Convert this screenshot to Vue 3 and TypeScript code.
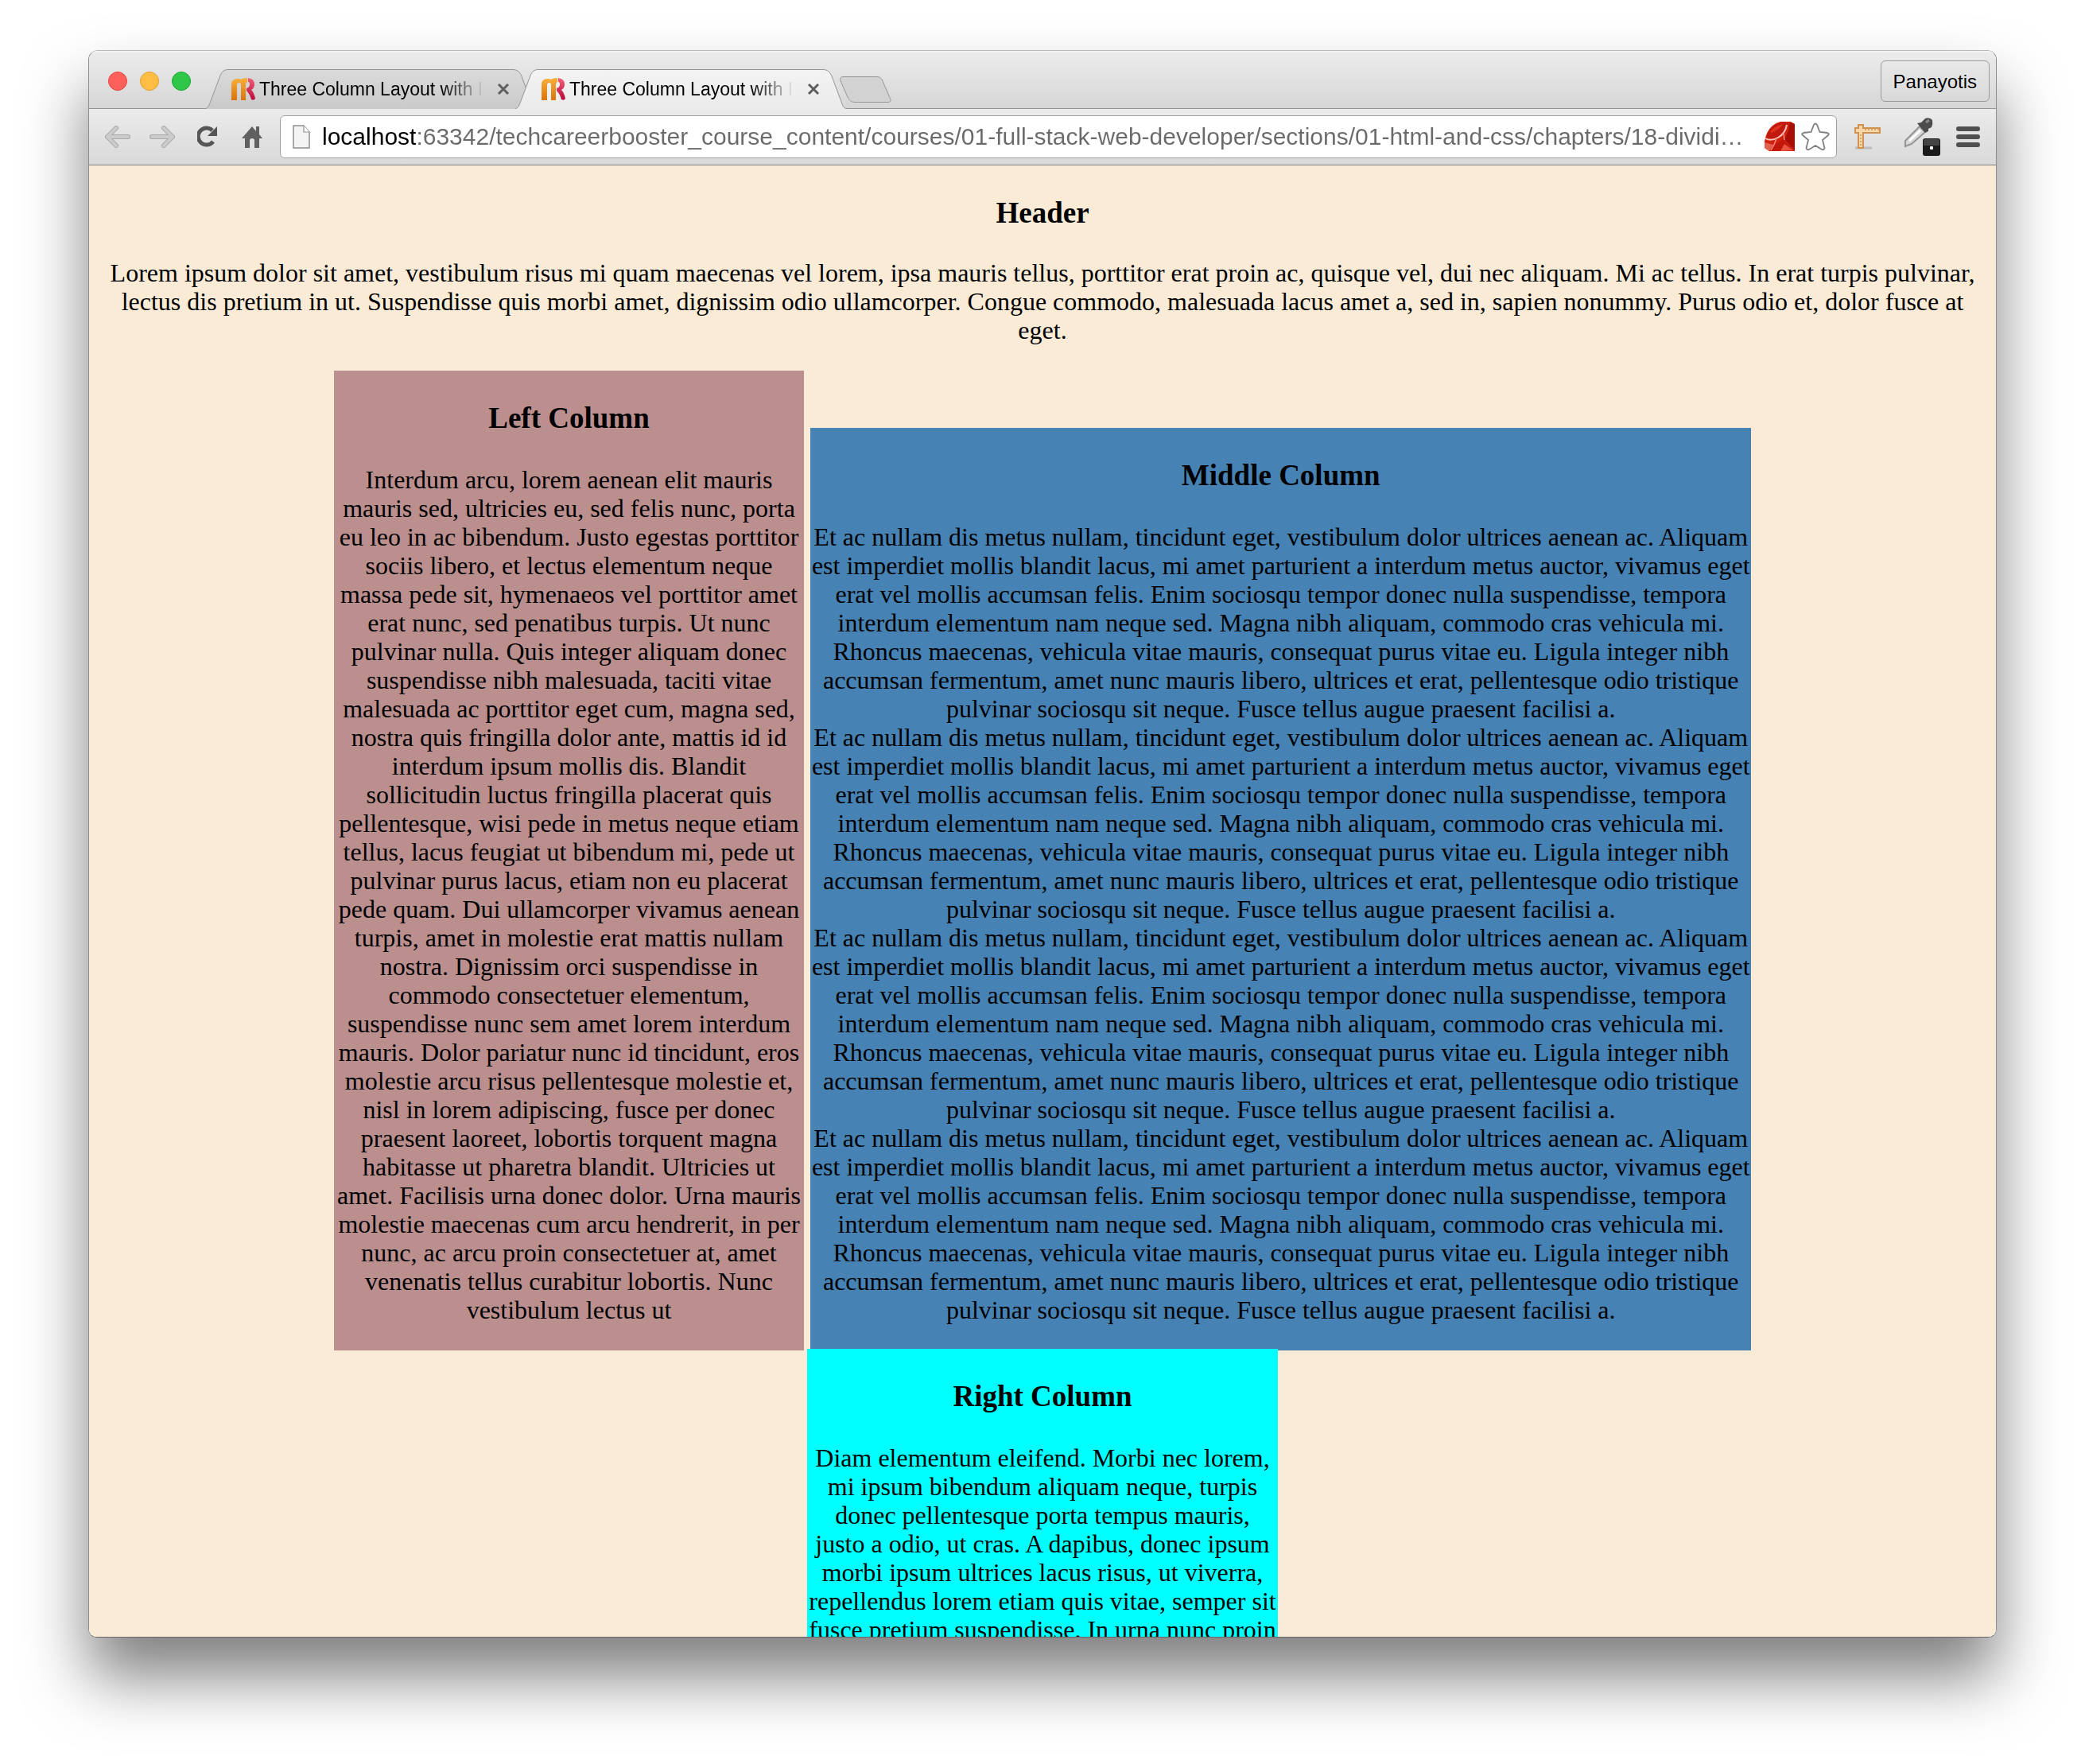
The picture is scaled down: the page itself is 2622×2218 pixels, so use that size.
<script setup lang="ts">
interface Tab {
  id: number
  title: string
  active: boolean
}

const tabs: Tab[] = [
  { id: 1, title: 'Three Column Layout with I', active: false },
  { id: 2, title: 'Three Column Layout with I', active: true },
]

const address =
  'localhost:63342/techcareerbooster_course_content/courses/01-full-stack-web-developer/sections/01-html-and-css/chapters/18-dividi…'

const headerText =
  'Lorem ipsum dolor sit amet, vestibulum risus mi quam maecenas vel lorem, ipsa mauris tellus, porttitor erat proin ac, quisque vel, dui nec aliquam. Mi ac tellus. In erat turpis pulvinar, lectus dis pretium in ut. Suspendisse quis morbi amet, dignissim odio ullamcorper. Congue commodo, malesuada lacus amet a, sed in, sapien nonummy. Purus odio et, dolor fusce at eget.'

const leftText =
  'Interdum arcu, lorem aenean elit mauris mauris sed, ultricies eu, sed felis nunc, porta eu leo in ac bibendum. Justo egestas porttitor sociis libero, et lectus elementum neque massa pede sit, hymenaeos vel porttitor amet erat nunc, sed penatibus turpis. Ut nunc pulvinar nulla. Quis integer aliquam donec suspendisse nibh malesuada, taciti vitae malesuada ac porttitor eget cum, magna sed, nostra quis fringilla dolor ante, mattis id id interdum ipsum mollis dis. Blandit sollicitudin luctus fringilla placerat quis pellentesque, wisi pede in metus neque etiam tellus, lacus feugiat ut bibendum mi, pede ut pulvinar purus lacus, etiam non eu placerat pede quam. Dui ullamcorper vivamus aenean turpis, amet in molestie erat mattis nullam nostra. Dignissim orci suspendisse in commodo consectetuer elementum, suspendisse nunc sem amet lorem interdum mauris. Dolor pariatur nunc id tincidunt, eros molestie arcu risus pellentesque molestie et, nisl in lorem adipiscing, fusce per donec praesent laoreet, lobortis torquent magna habitasse ut pharetra blandit. Ultricies ut amet. Facilisis urna donec dolor. Urna mauris molestie maecenas cum arcu hendrerit, in per nunc, ac arcu proin consectetuer at, amet venenatis tellus curabitur lobortis. Nunc vestibulum lectus ut'

const middleText =
  'Et ac nullam dis metus nullam, tincidunt eget, vestibulum dolor ultrices aenean ac. Aliquam est imperdiet mollis blandit lacus, mi amet parturient a interdum metus auctor, vivamus eget erat vel mollis accumsan felis. Enim sociosqu tempor donec nulla suspendisse, tempora interdum elementum nam neque sed. Magna nibh aliquam, commodo cras vehicula mi. Rhoncus maecenas, vehicula vitae mauris, consequat purus vitae eu. Ligula integer nibh accumsan fermentum, amet nunc mauris libero, ultrices et erat, pellentesque odio tristique pulvinar sociosqu sit neque. Fusce tellus augue praesent facilisi a.'

const rightText =
  'Diam elementum eleifend. Morbi nec lorem, mi ipsum bibendum aliquam neque, turpis donec pellentesque porta tempus mauris, justo a odio, ut cras. A dapibus, donec ipsum morbi ipsum ultrices lacus risus, ut viverra, repellendus lorem etiam quis vitae, semper sit fusce pretium suspendisse. In urna nunc proin'
</script>

<template>
  <div class="desktop">
    <div class="window">
      <div class="titlebar">
        <div class="lights">
          <button class="light red" aria-label="Close window"></button>
          <button class="light yellow" aria-label="Minimise window"></button>
          <button class="light green" aria-label="Zoom window"></button>
        </div>
        <div class="tabs">
          <div v-for="tab in tabs" :key="tab.id" class="tab" :class="{ active: tab.active }">
            <svg class="tab-shape" viewBox="0 0 417 50" preserveAspectRatio="none" aria-hidden="true">
              <defs>
                <linearGradient :id="'tab-fill-' + tab.id" x1="0" y1="0" x2="0" y2="1">
                  <stop offset="0" :stop-color="tab.active ? '#f3f3f3' : '#dadada'" />
                  <stop offset="1" :stop-color="tab.active ? '#ebebeb' : '#cacaca'" />
                </linearGradient>
              </defs>
              <path
                d="M0 50C4 49 5 45 7 40L19 8C21 3 24 .5 29 .5H387C393 .5 396 4 398 9L410 41C412 47 413 49 417 50Z"
                :fill="'url(#tab-fill-' + tab.id + ')'"
              />
              <path
                d="M0 49.5C4 49 5 45 7 40L19 8C21 3 24 .5 29 .5H387C393 .5 396 4 398 9L410 41C412 47 413 49 417 49.5"
                fill="none"
                stroke="#949494"
              />
            </svg>
            <svg class="favicon" viewBox="0 0 30 28" aria-hidden="true">
              <defs>
                <linearGradient :id="'fav-m-' + tab.id" x1="0" y1="0" x2="0" y2="1">
                  <stop offset="0" stop-color="#f9b03a" />
                  <stop offset="1" stop-color="#d9730c" />
                </linearGradient>
                <linearGradient :id="'fav-r-' + tab.id" x1="0" y1="0" x2="0" y2="1">
                  <stop offset="0" stop-color="#f2607a" />
                  <stop offset="1" stop-color="#b8083a" />
                </linearGradient>
              </defs>
              <path
                d="M0 28V8Q0 1 8 1Q10 1 12 2Q14 0 20 0V5Q18 6 18 10V28H12V9Q12 6 10 6Q7 6 7 9V28Z"
                :fill="'url(#fav-m-' + tab.id + ')'"
              />
              <path
                d="M21 0Q29 1 29 8Q29 13 25 15Q28 18 29 22L30 26Q28 29 25 27Q23 20 19 16L19 13Q23 12 23 8Q23 5 21 5Z"
                :fill="'url(#fav-r-' + tab.id + ')'"
              />
            </svg>
            <span class="tab-title">{{ tab.title }}</span>
            <button class="tab-close" aria-label="Close tab">
              <svg viewBox="0 0 16 16"><path d="M2 2L14 14M14 2L2 14" stroke="#5f5f5f" stroke-width="3" /></svg>
            </button>
          </div>
          <button class="new-tab" aria-label="New tab">
            <svg viewBox="0 0 65 33">
              <path
                d="M5 .5H46C51 .5 53 3 54 6L63 27C65 31 64 32.500 60 32.500H19C14 32.500 12 30 10 26L1 6C0 2 1 .5 5 .5Z"
                fill="#d2d2d2"
                stroke="#969696"
              />
            </svg>
          </button>
        </div>
        <button class="profile">Panayotis</button>
      </div>

      <div class="toolbar">
        <div class="nav">
          <div class="history">
            <button aria-label="Back">
              <svg width="32" height="28" viewBox="0 0 32 28">
                <path d="M14 3L3 14L14 25M3 14H29" fill="none" stroke="#a9a9a9" stroke-width="6" stroke-linecap="round" stroke-linejoin="round" />
                <path d="M14 3L3 14L14 25M3 14H29" fill="none" stroke="#cbcbcb" stroke-width="4" stroke-linecap="round" stroke-linejoin="round" />
              </svg>
            </button>
            <button aria-label="Forward">
              <svg width="32" height="28" viewBox="0 0 32 28">
                <path d="M18 3L29 14L18 25M29 14H3" fill="none" stroke="#a9a9a9" stroke-width="6" stroke-linecap="round" stroke-linejoin="round" />
                <path d="M18 3L29 14L18 25M29 14H3" fill="none" stroke="#cbcbcb" stroke-width="4" stroke-linecap="round" stroke-linejoin="round" />
              </svg>
            </button>
          </div>
          <button aria-label="Reload">
            <svg width="28" height="28" viewBox="0 0 28 28">
              <path d="M20 20A10.500 10.500 0 1 1 19 6" fill="none" stroke="#555" stroke-width="5" />
              <path d="M25 1V13H13Z" fill="#555" />
            </svg>
          </button>
          <button aria-label="Home">
            <svg width="26" height="28" viewBox="0 0 26 28">
              <path d="M13 1L18 7V1H22V11L26 16H22V28H16V19Q16 16 13 16Q10 16 10 19V28H4V16H0Z" fill="#606060" />
            </svg>
          </button>
        </div>
        <div class="omnibox">
          <svg class="page-icon" width="22" height="31" viewBox="0 0 22 31" aria-hidden="true">
            <path d="M1 1H14L21 9V29H1Z" fill="#f4f4f4" stroke="#8f8f8f" stroke-width="1.500" />
            <path d="M14 1V9H21" fill="#fff" stroke="#8f8f8f" stroke-width="1.200" />
          </svg>
          <input class="address" type="text" aria-label="Address" :value="address" />
          <svg class="ruby" width="38" height="38" viewBox="0 0 38 38" aria-hidden="true">
            <path d="M20 0H33L38 3V37H6L0 33V25Q2 12 10 5Q15 1 20 0Z" fill="#d3210f" />
            <path d="M33 1L38 3V36L25 22Q31 12 31 3Z" fill="#a80e05" />
            <path d="M3 20Q4 11 12 5Q22 -1 29 2Q28 11 20 17Q11 23 3 20Z" fill="#bf1a0d" />
            <path d="M7 13Q13 5 23 3Q19 10 9 14Z" fill="#dd3320" />
            <path d="M0 26L11 29L6 37L0 33Z" fill="#e4604e" />
            <path d="M13 29L23 22L36 36L8 37Z" fill="#c3170b" />
            <path d="M25 28L36 36L20 37Z" fill="#ec5442" />
            <path d="M1 21Q8 25 17 20Q26 15 28 4" fill="none" stroke="#f6c3bb" stroke-width="2" />
            <path d="M15 21L12 29L8 36M24 14L25 23" fill="none" stroke="#f08a7c" stroke-width="1.500" />
          </svg>
          <button class="star" aria-label="Bookmark this page">
            <svg width="36" height="36" viewBox="0 0 36 36">
              <path
                d="M16 3Q18 0 20 3L23.500 12L33 13Q36 14 34 16L27 22L29.500 32Q29 35 26 34L18 29L10 34Q7 35 6.500 32L9 22L2 16Q0 14 3 13L12.500 12Z"
                fill="#fff"
                stroke="#808080"
                stroke-width="1.800"
              />
            </svg>
          </button>
        </div>
        <div class="extensions">
          <button class="ruler" aria-label="Page ruler">
            <svg width="34" height="34" viewBox="0 0 34 34">
              <path d="M1 31H22" stroke="#bdbdbd" stroke-width="3" />
              <path d="M1 6H5V2H11V6H32V12H11V31H5V12H1Z" fill="#f9d6a8" stroke="#cf9252" stroke-width="2" />
              <path d="M13 8H31M8 14V30" stroke="#e0a566" stroke-width="2" stroke-dasharray="2 2" />
            </svg>
          </button>
          <button aria-label="Colour picker">
            <svg width="48" height="50" viewBox="0 0 48 50">
              <path d="M20 12L27 19L10 34L2 37L2 30Z" fill="#d8d8d8" stroke="#949494" stroke-width="2" />
              <path d="M7 30L21 17" stroke="#fff" stroke-width="3" />
              <path d="M17 8L22 7L27 2Q33 0 36 4Q37 9 35 13L31 15V18L27 20Z" fill="#4c4c4c" />
              <path d="M28 7L32 4" stroke="#888" stroke-width="3" />
              <rect x="24" y="27" width="22" height="22" rx="3" fill="#1a1a1a" />
              <path d="M27 28H43Q45 28 45 30V36H25V30Q25 28 27 28Z" fill="#444" />
              <rect x="33" y="37" width="4" height="4" rx="1" fill="#fff" />
            </svg>
          </button>
          <button aria-label="Menu">
            <svg width="30" height="28" viewBox="0 0 30 28">
              <path d="M3 4H27M3 14H27M3 24H27" stroke="#505050" stroke-width="6" stroke-linecap="round" />
            </svg>
          </button>
        </div>
      </div>

      <main class="page">
        <header>
          <h3>Header</h3>
          <p>{{ headerText }}</p>
        </header>
        <div class="columns">
          <section class="column left">
            <h3>Left Column</h3>
            <p>{{ leftText }}</p>
          </section>
          <section class="column middle">
            <h3>Middle Column</h3>
            <p><template v-for="n in 4" :key="n">{{ middleText }}<br v-if="n < 4" /></template></p>
          </section>
        </div>
        <div class="columns second-row">
          <section class="column right">
            <h3>Right Column</h3>
            <p>{{ rightText }}</p>
          </section>
        </div>
      </main>
    </div>
  </div>
</template>

<style>
body {
  margin: 0;
  background: #fff;
}
</style>

<style scoped>
* {
  box-sizing: border-box;
}

button {
  margin: 0;
  padding: 0;
  border: 0;
  background: none;
  font: inherit;
  color: inherit;
}

svg {
  display: block;
}

.desktop {
  display: flex;
  height: 100vh;
  padding: 63px 111px 159px;
  overflow: hidden;
  font-family: "Liberation Sans", Arial, sans-serif;
}

.window {
  display: flex;
  flex: 1;
  flex-direction: column;
  min-width: 0;
  overflow: hidden;
  border: 1px solid #8e8e8e;
  border-top-color: #b8b8b8;
  border-bottom-color: #666;
  border-radius: 12px 12px 10px 10px;
  box-shadow: 0 50px 80px rgba(0, 0, 0, 0.5);
}

.titlebar {
  display: flex;
  flex: none;
  height: 73px;
  padding: 0 8px 0 24px;
  background: linear-gradient(#f6f6f6, #ebebeb 3px, #d6d6d6 72px, #949494 72px);
}

.lights {
  display: flex;
  gap: 16px;
  padding-top: 26px;
}

.light {
  width: 24px;
  height: 24px;
  border: 1px solid #e2443f;
  border-radius: 50%;
  background: #ff605c;
}

.light.yellow {
  border-color: #dea034;
  background: #ffbd44;
}

.light.green {
  border-color: #18a832;
  background: #30c748;
}

.tabs {
  display: flex;
  flex: 1;
  padding: 23px 0 0 18px;
}

.tab {
  position: relative;
  display: flex;
  align-items: center;
  width: 417px;
  height: 50px;
  margin-right: -27px;
  padding: 0 34px 0 33px;
}

.tab.active {
  z-index: 1;
}

.tab-shape {
  position: absolute;
  inset: 0;
  width: 100%;
  height: 100%;
}

.favicon {
  position: relative;
  flex: none;
  width: 30px;
  height: 28px;
}

.tab-title {
  position: relative;
  flex: 1;
  margin: 0 12px 0 5px;
  overflow: hidden;
  font-size: 23px;
  line-height: 28px;
  white-space: nowrap;
  mask-image: linear-gradient(90deg, #000 calc(100% - 58px), transparent calc(100% - 4px));
}

.tab-close {
  position: relative;
  width: 16px;
  height: 16px;
}

.new-tab {
  width: 65px;
  height: 33px;
  margin: 9px 0 0 18px;
}

.profile {
  height: 52px;
  margin-top: 12px;
  padding: 2px 15px 0;
  border: 1px solid #9a9a9a;
  border-radius: 6px;
  font-size: 24px;
  line-height: 28px;
  text-shadow: 0 1px 0 #fff;
}

.toolbar {
  display: flex;
  flex: none;
  gap: 22px;
  align-items: center;
  height: 71px;
  padding: 0 20px;
  border-bottom: 1px solid #7d7d7d;
  background: linear-gradient(#ebebeb, #d9d9d9);
}

.nav {
  display: flex;
  gap: 28px;
}

.history {
  display: flex;
  gap: 24px;
}

.omnibox {
  display: flex;
  flex: 1;
  align-items: center;
  min-width: 0;
  height: 54px;
  padding: 0 8px 0 15px;
  border: 1px solid #a0a0a0;
  border-radius: 6px;
  background: #fff;
}

.address {
  flex: 1;
  min-width: 0;
  height: 40px;
  margin: 0 8px 0 15px;
  padding: 0;
  border: 0;
  outline: 0;
  /* The host is black, the rest of the address is grey. */
  background: linear-gradient(90deg, #000 119px, #6a6a6a 119px);
  background-clip: text;
  font-family: inherit;
  font-size: 30px;
  color: transparent;
}

.star {
  margin-left: 8px;
}

.extensions {
  display: flex;
  gap: 18px;
  align-items: center;
}

.ruler {
  width: 44px;
}

.page {
  flex: 1;
  min-height: 0;
  padding: 0 16px;
  overflow: hidden;
  background: #faebd7;
  color: #000;
  font-family: "Liberation Serif", "Times New Roman", serif;
  font-size: 32px;
  line-height: 36px;
  text-align: center;
}

h3 {
  margin: 0;
  padding: 38px 0 35px;
  font-size: 37px;
  line-height: 44px;
}

p {
  margin: 0;
  padding-bottom: 33px;
}

.columns {
  display: flex;
  gap: 8px;
  align-items: flex-end;
  justify-content: center;
}

.second-row {
  margin-top: -2px;
}

.column {
  width: 25%;
}

.column h3 {
  padding-bottom: 37px;
}

.left {
  background: #bc8f8f;
}

.middle {
  width: 50%;
  background: #4682b4;
}

.right {
  background: #0ff;
}
</style>
